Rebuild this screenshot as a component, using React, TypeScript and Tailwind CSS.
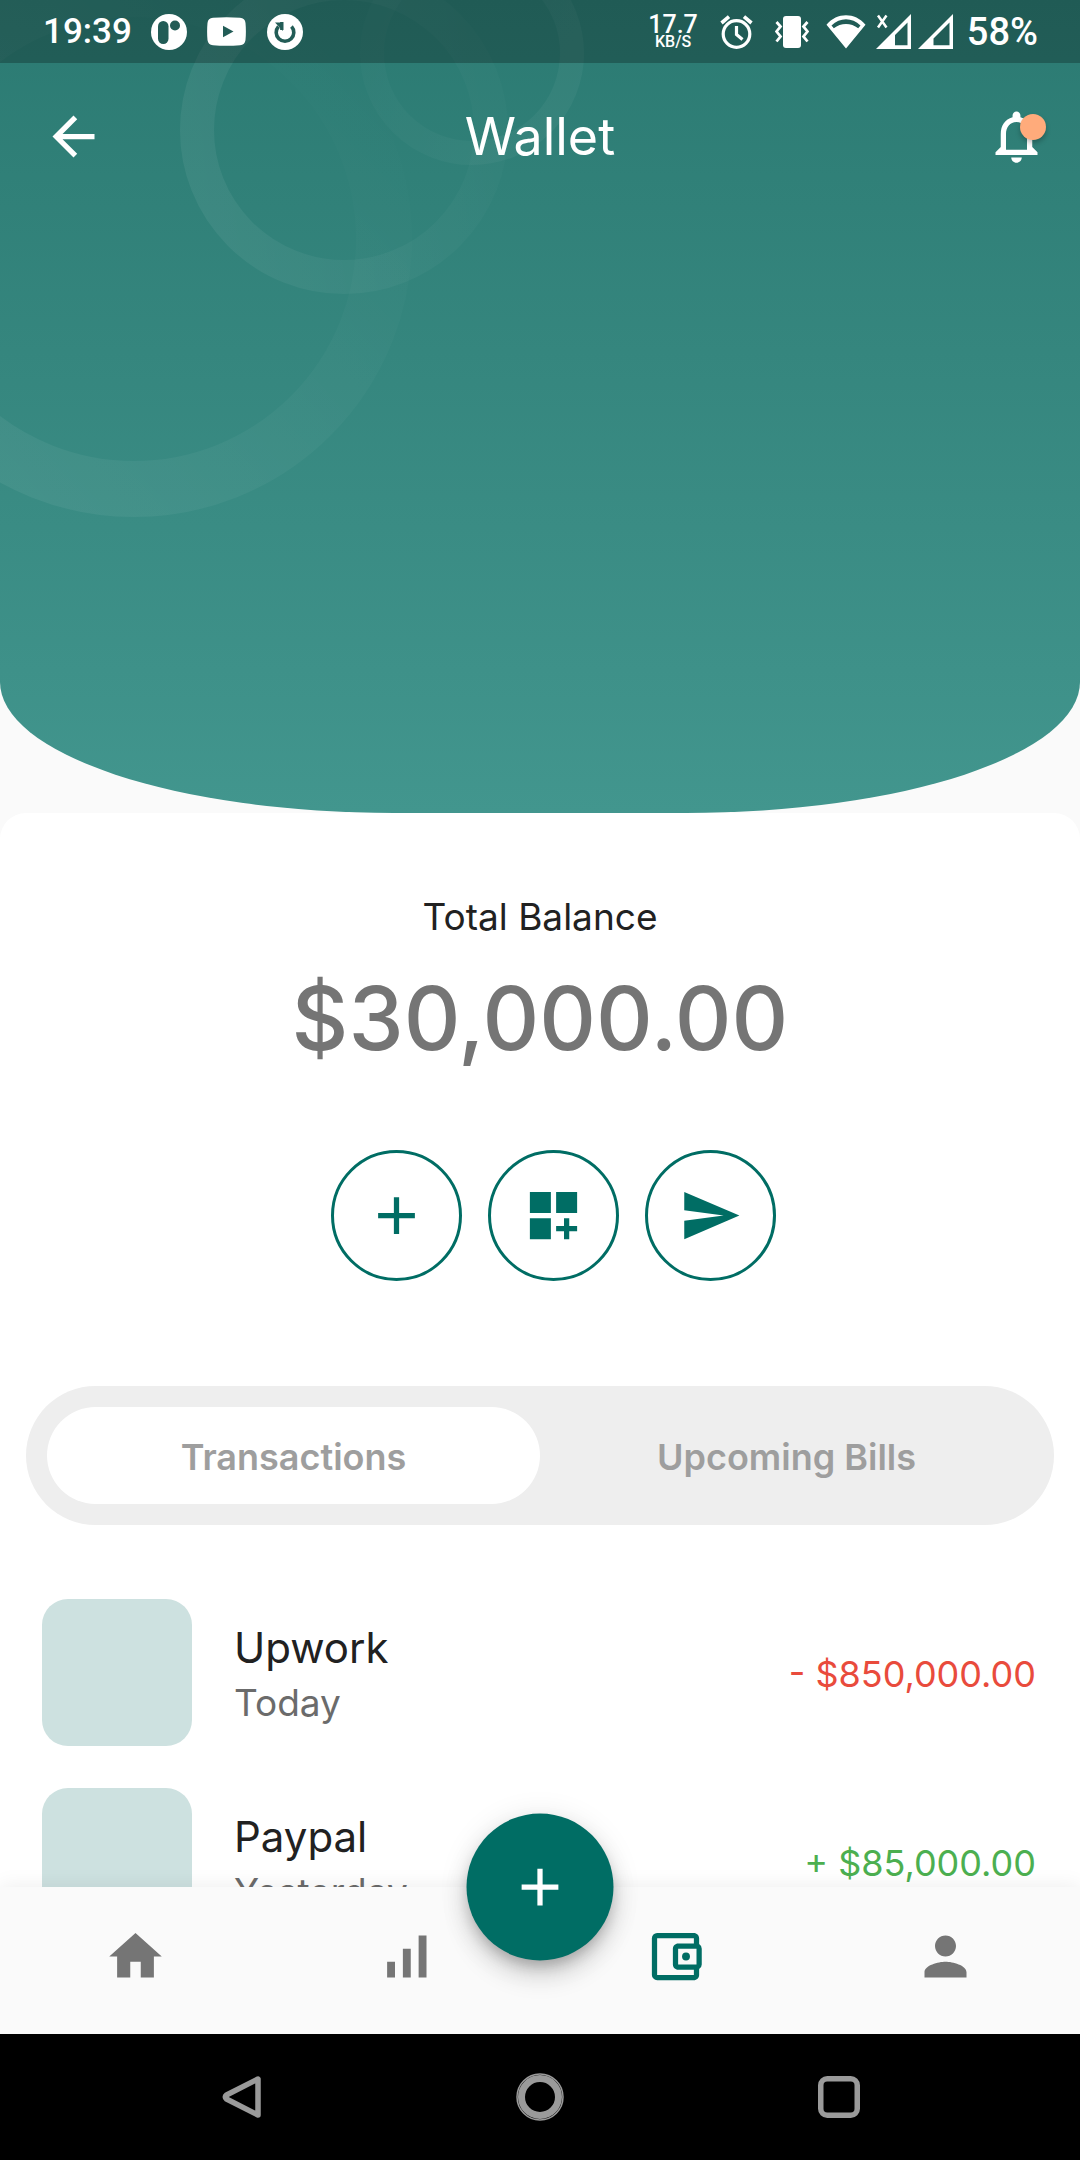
import React, { useState } from "react";
import {
  MdAdd,
  MdArrowBack,
  MdHome,
  MdNotificationsNone,
  MdOutlineAccountBalanceWallet,
  MdPerson,
  MdSend,
  MdSignalCellularAlt,
} from "react-icons/md";

function StatusBar() {
  return (
    <div className="relative flex h-[63px] items-center justify-between bg-black/25 pr-[42px] pl-[43px] font-[Roboto,sans-serif] font-medium text-white">
      <div className="flex items-center">
        <span className="mr-[22px] w-[86px] text-[35px] leading-[40px]">19:39</span>
        <svg className="mr-[20px] size-[36px]" viewBox="0 0 36 36" fill="none">
          <circle cx="18" cy="18" r="18" fill="#fff" />
          <rect x="7" y="7" width="10.5" height="23" rx="5.2" fill="#225c56" />
          <circle cx="24" cy="11.500" r="5" fill="#225c56" />
        </svg>
        <svg className="mr-[21px] h-[29px] w-[39px]" viewBox="0 0 39 29">
          <path fill="#fff" d="M6 .8Q19.500 -.5 33 .8 38 1.200 38.500 6 39.300 14.500 38.500 23 38 27.800 33 28.200 19.500 29.500 6 28.200 1 27.800.5 23-.3 14.500.5 6 1 1.200 6 .8Z" />
          <path fill="#225c56" d="M16 8.800v11.400L26.500 14.500z" />
        </svg>
        <svg className="size-[36px]" viewBox="0 0 36 36" fill="none">
          <circle cx="18" cy="18" r="18" fill="#fff" />
          <path d="M11.500 12.500A8.800 8.800 0 1 0 24.500 12.500" stroke="#225c56" strokeWidth="3.600" />
          <path d="M8 8.500h8v8.500z" fill="#225c56" />
          <path d="M14.800 8v8" stroke="#225c56" strokeWidth="3.400" />
        </svg>
      </div>
      <div className="flex items-center">
        <div className="mr-[22px] flex flex-col items-center">
          <span className="text-[25px] leading-[21px]">17.7</span>
          <span className="text-[16px] leading-[14px]">KB/S</span>
        </div>
        <svg className="mr-[22px] h-[34px] w-[33px]" viewBox="0 0 33 34" fill="none" stroke="#fff">
          <circle cx="16.500" cy="19" r="13.300" strokeWidth="3.200" />
          <path d="M16.500 11v8.500l6 5" strokeWidth="3.200" />
          <path d="M1.500 8 9 1.700M31.500 8 24 1.700" strokeWidth="3.600" />
        </svg>
        <svg className="mr-[17px] h-[32px] w-[34px]" viewBox="0 0 34 32" fill="none">
          <rect x="8" y="0" width="18" height="32" rx="3" fill="#fff" />
          <path d="M1.500 6 5.500 10.500 1.500 15.500 5.500 20.500 1.500 25.500M32.500 6 28.500 10.500 32.500 15.500 28.500 20.500 32.500 25.500" stroke="#fff" strokeWidth="2.800" />
        </svg>
        <svg className="mr-[10px] h-[34px] w-[40px]" viewBox="0 0 40 34">
          <path fill="#fff" fillRule="evenodd" d="M20 33.500 .5 9.800C11-2.800 29-2.800 39.500 9.800zM5.500 10.500 7.800 13.300C15 7.500 25 7.500 32.200 13.300L34.500 10.500C26 2 14 2 5.500 10.500z" />
        </svg>
        <svg className="mr-[7px] size-[35px]" viewBox="0 0 35 35">
          <path fill="#fff" fillRule="evenodd" d="M35 0v35H0zM31.500 8.500 19 21v10.300h12.500z" />
          <path d="M2 1.500 10.500 13.500M10.500 1.500 2 13.500" stroke="#fff" strokeWidth="2.500" />
        </svg>
        <svg className="mr-[14px] size-[35px]" viewBox="0 0 35 35">
          <path fill="#fff" fillRule="evenodd" d="M35 0v35H0zM31.500 8.500 15.500 24.500v6.800h16z" />
        </svg>
        <span className="text-[38px] leading-[40px]">58%</span>
      </div>
    </div>
  );
}

function Rings() {
  return (
    <svg className="absolute top-0 left-0 h-[530px] w-[620px]" viewBox="0 0 620 530" fill="none">
      <defs>
        <linearGradient id="ring" x1="0.1" y1="0.900" x2="1" y2="0">
          <stop offset="0" stopColor="#fff" stopOpacity="0.060" />
          <stop offset="0.900" stopColor="#fff" stopOpacity="0" />
        </linearGradient>
        <linearGradient id="ringSoft" x1="0" y1="0.600" x2="1" y2="0.400">
          <stop offset="0" stopColor="#fff" stopOpacity="0.060" />
          <stop offset="1" stopColor="#fff" stopOpacity="0.015" />
        </linearGradient>
        <linearGradient id="ringSmall" x1="0" y1="0.300" x2="1" y2="0.700">
          <stop offset="0" stopColor="#fff" stopOpacity="0.015" />
          <stop offset="1" stopColor="#fff" stopOpacity="0.040" />
        </linearGradient>
      </defs>
      <circle cx="134" cy="239" r="250" stroke="url(#ring)" strokeWidth="56" />
      <circle cx="344" cy="130" r="147" stroke="url(#ringSoft)" strokeWidth="34" />
      <circle cx="472" cy="53" r="100" stroke="url(#ringSmall)" strokeWidth="24" />
    </svg>
  );
}

function Hero() {
  return (
    <header className="relative h-[813px] shrink-0 overflow-hidden bg-linear-to-b from-[#2b7a72] to-[#42968e] [border-bottom-left-radius:394px_131px] [border-bottom-right-radius:394px_131px]">
      <Rings />
      <StatusBar />
      <div className="relative grid h-[147px] grid-cols-3 items-center px-8 text-white">
        <button type="button" aria-label="Back" className="ml-[10px] justify-self-start">
          <MdArrowBack className="size-[63px]" />
        </button>
        <h1 className="justify-self-center text-[52px] leading-[64px] font-normal">Wallet</h1>
        <button type="button" aria-label="Notifications" className="relative justify-self-end">
          <MdNotificationsNone className="size-[63px]" />
          <span className="absolute top-[9px] right-[2px] size-[26px] rounded-full bg-[#ffab7b] shadow-[0_3px_5px_rgba(0,0,0,0.25)]" />
        </button>
      </div>
    </header>
  );
}

function WidgetsIcon() {
  return (
    <svg className="size-[63px]" viewBox="0 0 24 24" fill="currentColor">
      <path d="M3 3h8v8H3zM13 3h8v8h-8zM3 13h8v8H3zM18 13h-2v3h-3v2h3v3h2v-3h3v-2h-3z" />
    </svg>
  );
}

function RoundAction({ label, children }: { label: string; children: React.ReactNode }) {
  return (
    <button
      type="button"
      aria-label={label}
      className="ml-[26px] flex size-[131px] items-center justify-center rounded-full border-[3px] border-[#006d64] text-[#006d64]"
    >
      {children}
    </button>
  );
}

const tabs = ["Transactions", "Upcoming Bills"];

const transactions = [
  { name: "Upwork", when: "Today", amount: "- $850,000.00", income: false },
  { name: "Paypal", when: "Yesterday", amount: "+ $85,000.00", income: true },
];

function BottomNav() {
  return (
    <nav className="relative z-10 grid h-[147px] shrink-0 grid-cols-4 justify-items-center bg-[#fafafa] pt-[38px] text-[#757575] shadow-[0_0_20px_rgba(0,0,0,0.08)]">
      <a href="#home" aria-label="Home" className="size-[63px]">
        <MdHome className="size-[63px]" />
      </a>
      <a href="#stats" aria-label="Statistics" className="size-[63px]">
        <MdSignalCellularAlt className="size-[63px]" />
      </a>
      <a href="#wallet" aria-label="Wallet" aria-current="page" className="size-[63px] text-[#006d64]">
        <MdOutlineAccountBalanceWallet className="size-[63px]" />
      </a>
      <a href="#profile" aria-label="Profile" className="size-[63px]">
        <MdPerson className="size-[63px]" />
      </a>
      <button
        type="button"
        aria-label="Add"
        className="absolute top-0 left-1/2 flex size-[147px] -translate-x-1/2 -translate-y-1/2 items-center justify-center rounded-full bg-[#006d64] text-white shadow-[0_8px_13px_-3px_rgba(0,0,0,0.2),0_16px_26px_rgba(0,0,0,0.14),0_3px_30px_rgba(0,0,0,0.1)]"
      >
        <MdAdd className="size-[63px]" />
      </button>
    </nav>
  );
}

function SystemBar() {
  return (
    <div className="relative z-20 grid h-[126px] shrink-0 grid-cols-3 place-items-center bg-black px-[92px]">
      <button type="button" aria-label="System back">
        <svg className="size-[48px]" viewBox="0 0 48 48" fill="none" stroke="#9a9a9a" strokeWidth="5.500" strokeLinejoin="round">
          <path d="M41 6v36L9.500 26Q7 24 9.500 22z" />
        </svg>
      </button>
      <button type="button" aria-label="System home">
        <svg className="size-[48px]" viewBox="0 0 48 48" fill="none" stroke="#9a9a9a">
          <circle cx="24" cy="24" r="18.500" strokeWidth="7" />
          <circle cx="24" cy="24" r="23" strokeWidth="1.500" />
        </svg>
      </button>
      <button type="button" aria-label="Recent apps">
        <svg className="size-[48px]" viewBox="0 0 48 48" fill="none" stroke="#9a9a9a" strokeWidth="5.500">
          <rect x="5.750" y="5.750" width="36.500" height="36.500" rx="6.500" />
        </svg>
      </button>
    </div>
  );
}

export default function App() {
  const [active, setActive] = useState(0);
  return (
    <div className="flex h-screen flex-col overflow-hidden bg-[#fafafa] font-[Inter,sans-serif] text-[#212121]">
      <div className="flex min-h-0 flex-1 flex-col overflow-hidden">
        <Hero />
        <main className="flex flex-col rounded-t-[26px] bg-white pt-[80px]">
          <section className="flex flex-col items-center">
            <h2 className="text-[37px] leading-[48px]">Total Balance</h2>
            <p className="mt-[29px] text-[88px] leading-[96px] font-medium text-[#757575]">$30,000.00</p>
            <div className="mt-[84px] flex">
              <RoundAction label="Add money">
                <MdAdd className="size-[63px]" />
              </RoundAction>
              <RoundAction label="Widgets">
                <WidgetsIcon />
              </RoundAction>
              <RoundAction label="Send">
                <MdSend className="size-[63px]" />
              </RoundAction>
            </div>
          </section>
          <div role="tablist" className="mx-[26px] mt-[105px] grid grid-cols-2 rounded-full bg-[#eeeeee] p-[21px]">
            {tabs.map((tab, i) => (
              <button
                key={tab}
                type="button"
                role="tab"
                aria-selected={active === i}
                onClick={() => setActive(i)}
                className={
                  active === i
                    ? "h-[97px] rounded-full bg-white pt-0.5 text-[36px] font-semibold text-[#9e9e9e]"
                    : "h-[97px] rounded-full pt-0.5 text-[36px] font-semibold text-[#9e9e9e]"
                }
              >
                {tab}
              </button>
            ))}
          </div>
          <ul className="mt-[74px] flex flex-col gap-[42px] pr-[44px] pl-[42px]">
            {transactions.map((t) => (
              <li key={t.name} className="flex items-center">
                <div className="h-[147px] w-[150px] rounded-[26px] bg-[#cde1e0]" />
                <div className="ml-[42px] flex flex-1 flex-col pt-1">
                  <span className="text-[42px] leading-[56px]">{t.name}</span>
                  <span className="text-[37px] leading-[54px] text-[#6b6b6b]">{t.when}</span>
                </div>
                <span className={t.income ? "pt-0.5 text-[36px] text-[#4caf50]" : "pt-0.5 text-[36px] text-[#e94b3c]"}>
                  {t.amount}
                </span>
              </li>
            ))}
          </ul>
        </main>
      </div>
      <BottomNav />
      <SystemBar />
    </div>
  );
}
